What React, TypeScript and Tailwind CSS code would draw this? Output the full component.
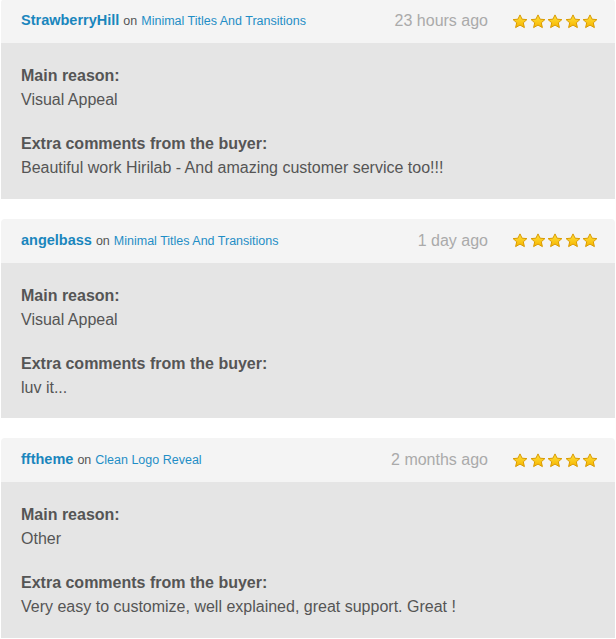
import React from "react";

interface Review {
  user: string;
  item: string;
  time: string;
  reason: string;
  comment: string;
}

const REVIEWS: Review[] = [
  {
    user: "StrawberryHill",
    item: "Minimal Titles And Transitions",
    time: "23 hours ago",
    reason: "Visual Appeal",
    comment: "Beautiful work Hirilab - And amazing customer service too!!!",
  },
  {
    user: "angelbass",
    item: "Minimal Titles And Transitions",
    time: "1 day ago",
    reason: "Visual Appeal",
    comment: "luv it...",
  },
  {
    user: "fftheme",
    item: "Clean Logo Reveal",
    time: "2 months ago",
    reason: "Other",
    comment: "Very easy to customize, well explained, great support. Great !",
  },
];

function Star() {
  return (
    <svg width="16" height="15" viewBox="0 0 16 15" className="block">
      <defs>
        <linearGradient id="starFill" x1="0" y1="0" x2="0" y2="1">
          <stop offset="0" stopColor="#ffe23a" />
          <stop offset="1" stopColor="#f7b500" />
        </linearGradient>
      </defs>
      <path
        d="M8 0.9 L10.1 5.2 L14.9 5.6 L11.3 8.8 L12.4 13.6 L8 11.1 L3.6 13.6 L4.7 8.8 L1.1 5.6 L5.9 5.2 Z"
        fill="url(#starFill)"
        stroke="#d99a00"
        strokeWidth="1"
        strokeLinejoin="round"
      />
    </svg>
  );
}

function ReviewCard({ r }: { r: Review }) {
  return (
    <div className="mx-[1px] rounded-t-[4px] overflow-hidden">
      <div className="h-[44px] bg-[#f4f4f4] flex items-center pl-[20px] pr-[17px]">
        <div className="flex-1 flex items-baseline gap-[4px] whitespace-nowrap">
          <span className="text-[14.5px] font-bold text-[#1a86bd]">{r.user}</span>
          <span className="text-[12.5px] text-[#555]">on</span>
          <span className="text-[12.5px] text-[#1f8ec6]">{r.item}</span>
        </div>
        <span className="text-[16px] text-[#aaaaaa] mr-[24px]">{r.time}</span>
        <div className="flex gap-[1.5px]">
          {[0, 1, 2, 3, 4].map((i) => (
            <Star key={i} />
          ))}
        </div>
      </div>
      <div className="bg-[#e5e5e5] px-[20px] pt-[21px] pb-[19px] text-[16px] leading-[24px] text-[#555]">
        <p className="font-bold">Main reason:</p>
        <p>{r.reason}</p>
        <p className="font-bold mt-[20px]">Extra comments from the buyer:</p>
        <p>{r.comment}</p>
      </div>
    </div>
  );
}

export default function App() {
  return (
    <div
      className="w-[616px] h-[639px] overflow-hidden bg-white flex flex-col gap-[20px] -mt-[1px]"
      style={{ fontFamily: '"Liberation Sans", Arial, sans-serif' }}
    >
      {REVIEWS.map((r) => (
        <ReviewCard key={r.user} r={r} />
      ))}
    </div>
  );
}
